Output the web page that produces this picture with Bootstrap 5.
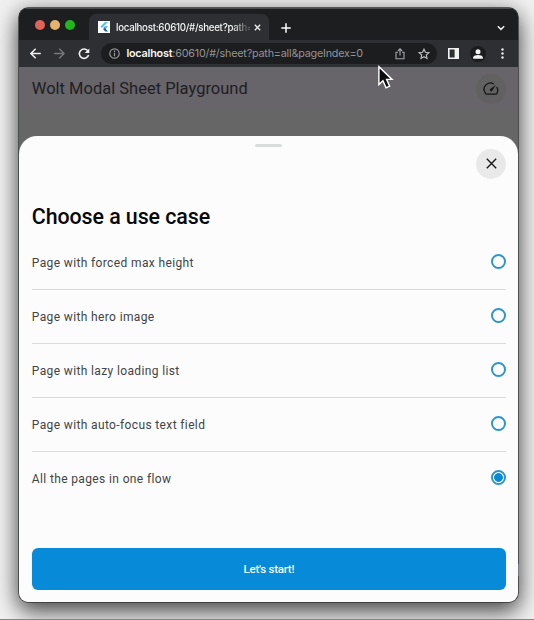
<!DOCTYPE html>
<html lang="en">
<head>
<meta charset="utf-8">
<meta name="viewport" content="width=device-width, initial-scale=1">
<title>Wolt Modal Sheet Playground</title>
<link href="https://cdn.jsdelivr.net/npm/bootstrap@5.3.0/dist/css/bootstrap.min.css" rel="stylesheet">
<style>
body{width:534px;height:620px;overflow:hidden;background:#f0f1f0;font-family:Roboto,"Liberation Sans",sans-serif;border-bottom:1px solid #858585;padding:8px 15.6px 0 19.4px}
svg{display:block;flex:none}
.browser{height:594px;border-radius:9px;background:#666;overflow:hidden;box-shadow:0 0 0 .7px #303331,0 10px 22px rgba(0,0,0,.55),0 3px 22px rgba(0,0,0,.36)}
.tabstrip{height:32px;background:#1d1e20;padding-left:15.6px;border-top:1px solid #4b4c4e}
.light{width:10px;height:10px;border-radius:50%}
.light-r{background:#e0635a}.light-y{background:#e6b36f}.light-g{background:#23b51d}
.tab{width:180px;height:26px;margin-left:14px;background:#2e2f32;border-radius:7px 7px 0 0;padding:0 8px 0 9px;font:500 9.7px Inter,"Liberation Sans",sans-serif;color:#f4f4f4}
.tab-title{width:134px;margin-left:6px;white-space:nowrap;letter-spacing:-.27px;-webkit-mask-image:linear-gradient(90deg,#000 87%,rgba(0,0,0,.25) 97%);mask-image:linear-gradient(90deg,#000 87%,rgba(0,0,0,.25) 97%)}
.toolbar{height:27px;background:#2e2f32;padding-left:11px}
.omnibox{width:336px;height:21px;margin-left:11px;background:#1c1d1f;border-radius:11px;padding:0 7.500px 0 8px;font:400 10.8px Inter,"Liberation Sans",sans-serif;color:#929497}
.omnibox b{color:#f5f5f5;font-weight:600}
.url{margin-left:6px;white-space:nowrap;letter-spacing:-.21px}
.avatar{width:16px;height:16px;background:#1b1c1e}
.apphead{height:42px;background:#67646a;padding:2px 12.4px 0;font-size:16.5px;color:#202022}
.gauge{width:30px;height:30px;background:#616161}
.sheet{height:466px;margin-top:27px;background:#fcfcfd;border-radius:18px 18px 0 0;padding:7.500px 12.4px 12px}
.grip{width:27px;height:3px;background:#dadddc;border-radius:2px}
.dismiss{width:30px;height:30px;background:#e8e9e8;margin-top:2px}
.sheet-title{font-size:21.4px;line-height:26px;font-weight:500;margin:25px 0 0;color:#080808;letter-spacing:-.08px}
.options{margin-top:6px}
.option{height:54px;font-size:12px;letter-spacing:.37px;color:#424447;border-bottom:1.3px solid #d9dbdd}
.option span{padding-top:1px}
.option:last-child{border-bottom-color:transparent}
.form-check-input.dot{width:15px;height:15px;margin:0 0 1px;border:2px solid #2b95d2;background:#fff;position:static}
.form-check-input.dot:checked{background:radial-gradient(circle,#078bd6 4px,#fff 4.7px)}
.start{height:42px;background:#078bd8;border:0;border-radius:6px;color:#f4f9ff;font-size:11.5px;font-weight:500;letter-spacing:-.25px;padding:1px 0 0}
.pointer{left:377px;top:65px}
.edge{left:517.5px;top:564px;width:1.5px;height:12px;background:#777c80}
</style>
</head>
<body>
<main class="browser d-flex flex-column">
  <div class="tabstrip d-flex align-items-end">
    <div class="d-flex align-self-center" style="gap:4px"><i class="light light-r"></i><i class="light light-y" style="margin-left:1px"></i><i class="light light-g" style="margin-left:1px"></i></div>
    <div class="tab d-flex align-items-center">
      <svg width="12" height="12" viewBox="0 0 12 12"><path fill="#fff" d="M0 0h12v12H0z"/><path fill="#54bff0" d="M7 1h3L4 7 2.5 5.5z"/><path fill="#3aaee6" d="M7 5.2h3L6.8 8.4 5.2 7z"/><path fill="#1766a8" d="M5.2 8.3l1.5-1.5L10 10.5H7.2z"/></svg>
      <span class="tab-title">localhost:60610/#/sheet?path=</span>
      <svg class="ms-auto" width="7" height="7" viewBox="0 0 7 7"><path d="M.8.8l5.4 5.4M6.2.8L.8 6.2" stroke="#eee" stroke-width="1.3"/></svg>
    </div>
    <svg class="align-self-center" style="margin-left:12px;margin-top:7px" width="10" height="10" viewBox="0 0 10 10"><path d="M5 .3v9.4M.3 5h9.4" stroke="#fff" stroke-width="1.5"/></svg>
    <svg class="align-self-center ms-auto" style="margin-right:13px;margin-top:7px" width="8" height="6" viewBox="0 0 8 6"><path d="M.8 1.2L4 4.4l3.2-3.2" fill="none" stroke="#eee" stroke-width="1.5"/></svg>
  </div>
  <div class="toolbar d-flex align-items-center">
    <svg width="11" height="11" viewBox="0 0 11 11"><path d="M10.8 5.5H1M5.7.7L.9 5.5l4.8 4.8" fill="none" stroke="#eee" stroke-width="1.5"/></svg>
    <svg style="margin-left:13px" width="11" height="11" viewBox="0 0 11 11"><path d="M.2 5.5H10M5.3.7l4.8 4.8-4.8 4.8" fill="none" stroke="#77797c" stroke-width="1.4"/></svg>
    <svg style="margin-left:13px" width="12" height="12" viewBox="0 0 12 12"><path d="M10 3.1A4.7 4.7 0 1 0 10.6 7" fill="none" stroke="#f0f0f0" stroke-width="1.6"/><path d="M11.3.5v4.6H6.7z" fill="#f0f0f0"/></svg>
    <div class="omnibox d-flex align-items-center">
      <svg width="11" height="11" viewBox="0 0 11 11"><circle cx="5.5" cy="5.5" r="4.7" fill="none" stroke="#929497" stroke-width="1.2"/><path d="M5.5 4.8v3.4M5.5 2.6v1.3" stroke="#929497" stroke-width="1.3"/></svg>
      <span class="url"><b>localhost</b>:60610/#/sheet?path=all&amp;pageIndex=0</span>
      <svg class="ms-auto" width="10" height="12" viewBox="0 0 10 12"><path d="M3 4.3H1v6.5h8V4.3H7M5 7.5V1.2M2.9 3L5 .9 7.1 3" fill="none" stroke="#a5a7aa" stroke-width="1.1"/></svg>
      <svg style="margin-left:13px" width="12" height="12" viewBox="0 0 12 12"><path d="M6 1.2l1.4 3.1 3.5.4-2.6 2.3.7 3.4-3-1.7-3 1.7.7-3.4L1.1 4.700l3.5-.4z" fill="none" stroke="#b9bbbd" stroke-width="1.2"/></svg>
    </div>
    <svg style="margin-left:11px" width="11" height="11" viewBox="0 0 11 11"><path fill="#f2f2f2" fill-rule="evenodd" d="M0 0h11v11H0zM1.6 1.6v7.8h5V1.6z"/></svg>
    <span class="avatar rounded-circle d-flex align-items-center justify-content-center" style="margin-left:10.500px"><svg width="10" height="10" viewBox="0 0 10 10"><circle cx="5" cy="2.7" r="2.5" fill="#f3f3f3"/><path d="M.2 9.8V8.3C.2 6.8 3 6 5 6s4.8.8 4.8 2.3v1.5z" fill="#f3f3f3"/></svg></span>
    <svg class="ms-auto" style="margin-right:14.500px" width="3" height="11" viewBox="0 0 3 11"><g fill="#eee"><circle cx="1.5" cy="1.5" r="1.2"/><circle cx="1.5" cy="5.5" r="1.2"/><circle cx="1.5" cy="9.5" r="1.2"/></g></svg>
  </div>
  <header class="apphead d-flex align-items-center justify-content-between">
    <span class="app-name">Wolt Modal Sheet Playground</span>
    <span class="gauge rounded-circle d-flex align-items-center justify-content-center"><svg width="16" height="14" viewBox="0 0 16 14"><path d="M10.700 2A6.300 6.300 0 0 0 2.400 11.200q.4.900 1.400.9h8.800q1 0 1.400-.9A6.300 6.300 0 0 0 13.700 5" fill="none" stroke="#151515" stroke-width="1.300"/><path d="M12.900 2.900L9.200 8.800A1.300 1.300 0 1 1 7.200 7.100z" fill="#151515"/></svg></span>
  </header>
  <section class="sheet d-flex flex-column">
    <div class="grip mx-auto"></div>
    <button class="dismiss btn rounded-circle p-0 border-0 ms-auto d-flex align-items-center justify-content-center" aria-label="Close"><svg width="11" height="11" viewBox="0 0 11 11"><path d="M.8.8l9.4 9.4M10.2.8L.8 10.2" stroke="#161616" stroke-width="1.35"/></svg></button>
    <h1 class="sheet-title"><span>Choose a use case</span></h1>
    <div class="options">
      <label class="option d-flex align-items-center justify-content-between"><span>Page with forced max height</span><input class="form-check-input dot" type="radio" name="usecase"></label>
      <label class="option d-flex align-items-center justify-content-between"><span>Page with hero image</span><input class="form-check-input dot" type="radio" name="usecase"></label>
      <label class="option d-flex align-items-center justify-content-between"><span>Page with lazy loading list</span><input class="form-check-input dot" type="radio" name="usecase"></label>
      <label class="option d-flex align-items-center justify-content-between"><span>Page with auto-focus text field</span><input class="form-check-input dot" type="radio" name="usecase"></label>
      <label class="option d-flex align-items-center justify-content-between"><span>All the pages in one flow</span><input class="form-check-input dot" type="radio" name="usecase" checked></label>
    </div>
    <button class="start btn w-100 mt-auto">Let's start!</button>
  </section>
</main>
<svg class="pointer position-absolute" width="17" height="25" viewBox="0 0 18 26"><path d="M2 1.5v19l4.3-4 3.3 7.400 3.8-1.7-3.3-7.200h5.8z" fill="#0c0c0c" stroke="#fff" stroke-width="1.5"/></svg>
<i class="edge position-absolute"></i>
<script src="https://cdn.jsdelivr.net/npm/bootstrap@5.3.0/dist/js/bootstrap.bundle.min.js"></script>
</body>
</html>
